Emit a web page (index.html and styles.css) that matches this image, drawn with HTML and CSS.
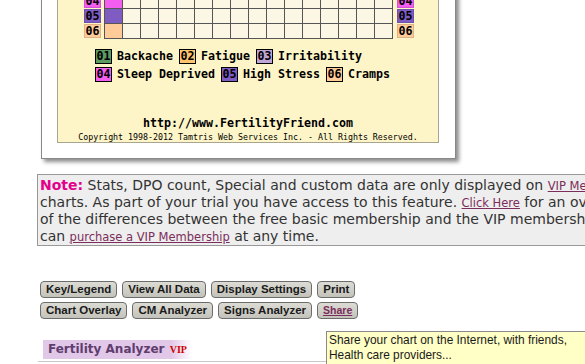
FILE: index.html
```html
<!DOCTYPE html>
<html lang="en">
<head>
  <meta charset="UTF-8">
  <meta name="viewport" content="width=device-width, initial-scale=1.0">
  <title>Fertility Friend - Chart</title>
  <link rel="stylesheet" href="styles.css">
</head>
<body>
  <div class="chart-frame">
    <div class="chart">
      <div class="grid-row">
        <span class="tag c4">04</span>
        <div class="cells"><span class="cell c4"></span><span class="cell"></span><span class="cell"></span><span class="cell"></span><span class="cell"></span><span class="cell"></span><span class="cell"></span><span class="cell"></span><span class="cell"></span><span class="cell"></span><span class="cell"></span><span class="cell"></span><span class="cell"></span><span class="cell"></span><span class="cell"></span><span class="cell"></span></div>
        <span class="tag c4">04</span>
      </div>
      <div class="grid-row">
        <span class="tag c5">05</span>
        <div class="cells"><span class="cell c5"></span><span class="cell"></span><span class="cell"></span><span class="cell"></span><span class="cell"></span><span class="cell"></span><span class="cell"></span><span class="cell"></span><span class="cell"></span><span class="cell"></span><span class="cell"></span><span class="cell"></span><span class="cell"></span><span class="cell"></span><span class="cell"></span><span class="cell"></span></div>
        <span class="tag c5">05</span>
      </div>
      <div class="grid-row">
        <span class="tag c6">06</span>
        <div class="cells"><span class="cell c6"></span><span class="cell"></span><span class="cell"></span><span class="cell"></span><span class="cell"></span><span class="cell"></span><span class="cell"></span><span class="cell"></span><span class="cell"></span><span class="cell"></span><span class="cell"></span><span class="cell"></span><span class="cell"></span><span class="cell"></span><span class="cell"></span><span class="cell"></span></div>
        <span class="tag c6">06</span>
      </div>

      <div class="legend">
        <div class="legend-row">
          <span class="key c1">01</span><span class="key-name">Backache</span>
          <span class="key c2">02</span><span class="key-name">Fatigue</span>
          <span class="key c3">03</span><span class="key-name">Irritability</span>
        </div>
        <div class="legend-row">
          <span class="key c4">04</span><span class="key-name">Sleep Deprived</span>
          <span class="key c5">05</span><span class="key-name">High Stress</span>
          <span class="key c6">06</span><span class="key-name">Cramps</span>
        </div>
      </div>

      <div class="url">http://www.FertilityFriend.com</div>
      <div class="copyright">Copyright 1998-2012 Tamtris Web Services Inc. - All Rights Reserved.</div>
    </div>
  </div>

  <div class="note">
    <b class="note-label">Note:</b> Stats, DPO count, Special and custom data are only displayed on <a href="#">VIP Members'</a><br>
    charts. As part of your trial you have access to this feature. <a href="#">Click Here</a> for an overview<br>
    of the differences between the free basic membership and the VIP membership. You<br>
    can <a href="#">purchase a VIP Membership</a> at any time.
  </div>

  <div class="toolbar">
    <div class="toolbar-row">
      <button>Key/Legend</button>
      <button>View All Data</button>
      <button>Display Settings</button>
      <button>Print</button>
    </div>
    <div class="toolbar-row">
      <button>Chart Overlay</button>
      <button>CM Analyzer</button>
      <button>Signs Analyzer</button>
      <button class="share">Share</button>
    </div>
  </div>

  <div class="analyzer">Fertility Analyzer <span class="vip">VIP</span></div>
  <div class="rule"></div>

  <div class="tooltip">Share your chart on the Internet, with friends,<br>Health care providers...</div>
</body>
</html>
```

FILE: styles.css
```css
body { margin: 0; font-family: "DejaVu Sans", Verdana, sans-serif; background: #fff; overflow: hidden; }

.chart-frame { width: 382px; margin: -30px 0 0 41px; padding: 0 16px 15px 15px; border: 1px solid #888; background: #fff; box-shadow: 3px 3px 4px rgba(0,0,0,0.45); }
.chart { border: 1px solid #a8a490; background: #fdf5c8; padding-top: 22px; font-family: "DejaVu Sans Mono", monospace; font-weight: bold; font-size: 11.63px; color: #000; }

.grid-row { display: flex; height: 15px; margin-left: 26px; }
.cells { display: flex; border-left: 1px solid #555; margin: 0 4px 0 3px; }
.cell { width: 17px; height: 14px; border-right: 1px solid #555; border-bottom: 1px solid #555; background: #fcf6e4; }
.tag { box-sizing: border-box; width: 17px; height: 14px; line-height: 12px; text-align: center; border: 1px solid rgba(0,0,0,0.12); }

.c1 { background: #5d9a62; }
.c2 { background: #ffc46e; }
.c3 { background: #bfa6d6; }
.c4 { background: #f35ef0; }
.c5 { background: #7f5cc2; }
.c6 { background: #ffcb98; }

.legend { margin: 8px 0 0 37px; }
.legend-row { display: flex; align-items: center; height: 18px; }
.key { box-sizing: border-box; width: 17px; height: 15px; line-height: 13px; text-align: center; border: 1px solid #000; }
.key-name { margin: 0 6px 0 5px; }

.url { margin-top: 33px; text-align: center; line-height: 14px; }
.copyright { margin-top: 2px; text-align: center; font-weight: normal; font-size: 8.3px; line-height: 10px; }

.note { width: 760px; margin: 15px 0 0 37px; padding: 2px 0 0 2px; border: 1px solid #999; background: #eee; color: #333; font-size: 14px; line-height: 17px; white-space: nowrap; }
.note-label { color: #e3008c; }
.note a { color: #7b2d5b; font-size: 11.5px; line-height: 1; }

.toolbar { margin: 35px 0 0 40px; display: flex; flex-direction: column; gap: 4px; }
.toolbar-row { display: flex; gap: 5px; }
button { box-sizing: border-box; height: 17px; padding: 0 5px; border: 1px solid #6c6c6c; border-radius: 4px; background: linear-gradient(#dcdcd5, #c3c3bb); font: bold 11.5px "Liberation Sans", Arial, sans-serif; line-height: 15px; color: #1a1a1a; }
button.share { padding: 0 5px; font-size: 10.5px; color: #7b2d5b; text-decoration: underline; }

.analyzer { width: 144px; height: 19px; margin: 21px 0 0 43px; padding-left: 5px; background: linear-gradient(to right, #e2c8e8 86%, rgba(226,200,232,0)); color: #5e3d6e; font-weight: bold; font-size: 12px; line-height: 19px; }
.vip { margin-left: 1px; font: bold 10px "Liberation Serif", serif; color: #d00000; }
.rule { margin: 2px 0 0 38px; border-top: 1px solid #c8c8c8; }

.tooltip { position: absolute; left: 326px; top: 331px; width: 300px; padding: 1px 3px 2px 2px; border: 1px solid #8a8a8a; background: #ffffc6; color: #1a1a1a; font: 11.9px "Liberation Sans", Arial, sans-serif; line-height: 15px; white-space: nowrap; }
```
